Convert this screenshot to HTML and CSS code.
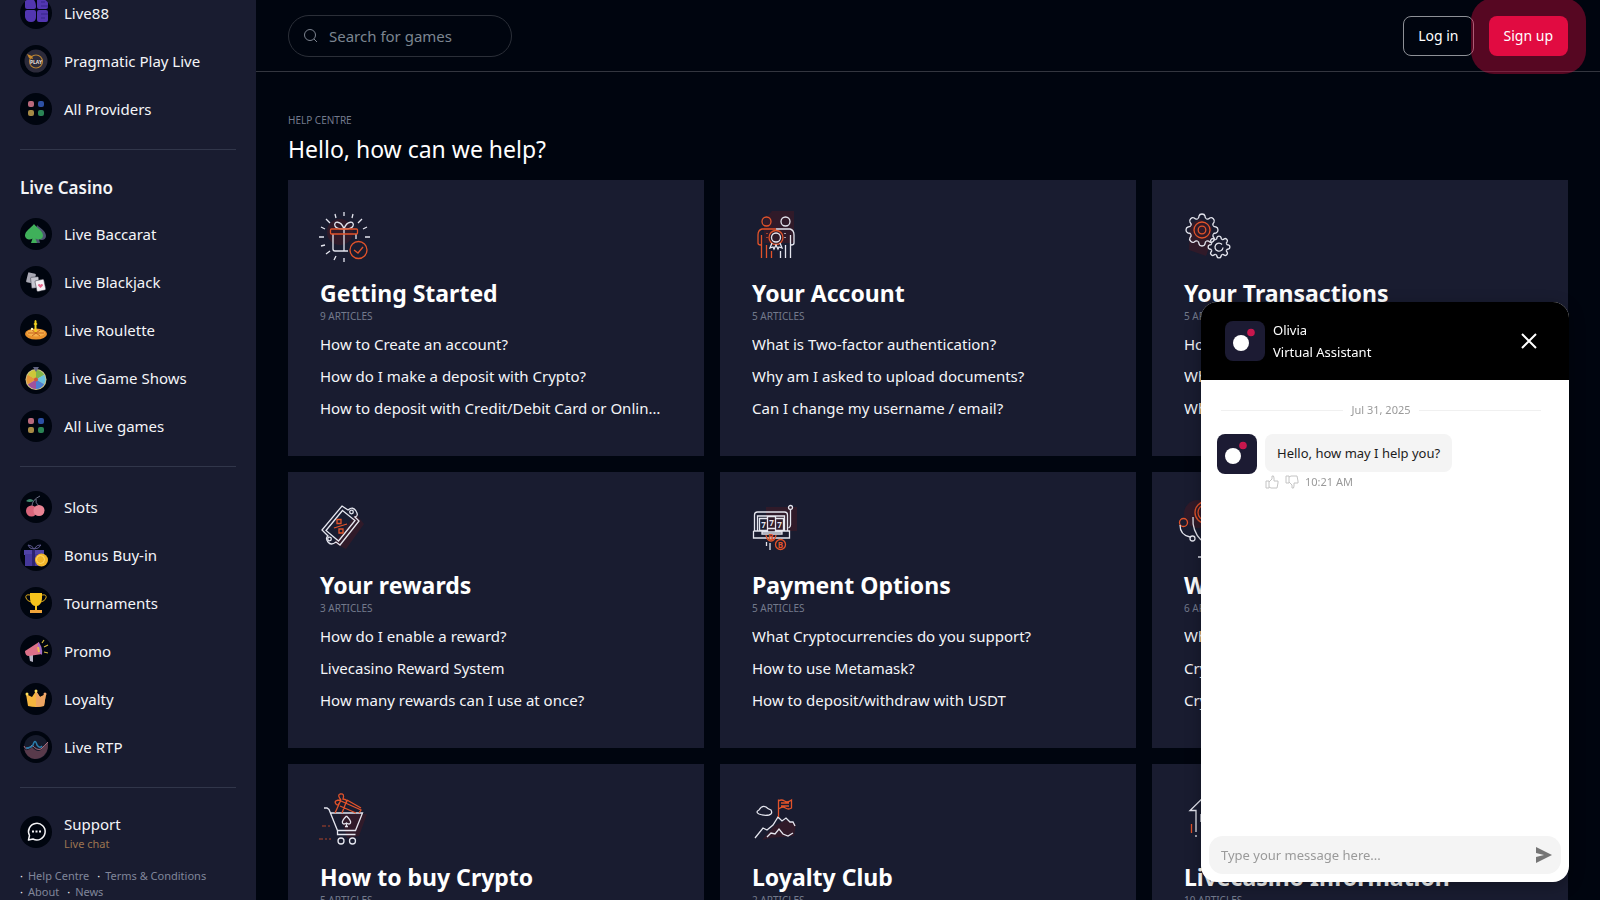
FILE: index.html
```html
<!DOCTYPE html>
<html lang="en">
<head>
    <meta charset="UTF-8">
    <meta name="viewport" content="width=device-width, initial-scale=1.0">
    <title>Help Centre</title>
    <link rel="stylesheet" href="styles.css">
</head>
<body>
    <div class="app">
        <aside class="sidebar">
            <nav class="menu">
                <a class="menu-item" href="#">
                    <svg class="menu-icon" viewBox="0 0 32 32"><g fill="#5236b0"><path d="M5 3q0-2 2-2h3c4 0 6 4 6 9q0 2-2 2H7q-2 0-2-2z"/><rect x="17" y="1" width="11" height="11" rx="2"/><path d="M5 15q0-2 2-2h7q2 0 2 2v5q0 5-5 5t-6-5z"/><rect x="17" y="13" width="11" height="12" rx="2"/></g><path d="M21 5h4M21 9h7M21 17h7M21 21h4" stroke="#35248a" stroke-width="1"/></svg>
                    Live88
                </a>
                <a class="menu-item" href="#">
                    <svg class="menu-icon" viewBox="0 0 32 32"><circle cx="16" cy="16" r="11.500" fill="#2b2a3a"/><circle cx="16" cy="16.500" r="6.500" fill="none" stroke="#b58235" stroke-width="1.200"/><path d="M7 9l5 2 1 3-4-1z" fill="#c9892c"/><path d="M11 14h10v5H11z" fill="#2b2a3a"/><text x="16" y="18.500" class="tiny-text" fill="#e4dfd6">PLAY</text></svg>
                    Pragmatic Play Live
                </a>
                <a class="menu-item" href="#">
                    <svg class="menu-icon" viewBox="0 0 32 32"><rect x="8" y="8" width="6" height="6" rx="2" fill="#b8697c"/><rect x="18" y="8" width="6" height="6" rx="2" fill="#2c50a4"/><rect x="8" y="17" width="6" height="6" rx="2" fill="#a58a45"/><rect x="18" y="17" width="6" height="6" rx="2" fill="#2a8455"/></svg>
                    All Providers
                </a>
            </nav>

            <nav class="menu">
                <h2 class="menu-title">Live Casino</h2>
                <a class="menu-item" href="#">
                    <svg class="menu-icon" viewBox="0 0 32 32"><path d="M17 7c3 3 9 6 9 11 0 4-5 5-7 3l1 4h-6z" fill="#4d5470"/><path d="M14 6c3 4 9 7 9 11.500 0 4-5 5-7.500 3l1.500 4.500h-6l1.500-4.500C10 23 5 21 5 17.500 5 13 11 10 14 6z" fill="#3fb05a"/></svg>
                    Live Baccarat
                </a>
                <a class="menu-item" href="#">
                    <svg class="menu-icon" viewBox="0 0 32 32"><rect x="7" y="7" width="8" height="10" rx="1" fill="#a9a9b4" transform="rotate(14 11 12)"/><rect x="11" y="11" width="8" height="11" rx="1" fill="#c6c6cf" stroke="#33353f" stroke-width=".5" transform="rotate(-6 15 16)"/><rect x="16" y="14" width="9" height="11" rx="1" fill="#f3f0f4" stroke="#33353f" stroke-width=".5" transform="rotate(-12 20 20)"/><path d="M20.500 22l-2.500-2.500c0-2 2-2 2.500-.5.500-1.500 2.500-1 2.500.5z" fill="#e8658a"/></svg>
                    Live Blackjack
                </a>
                <a class="menu-item" href="#">
                    <svg class="menu-icon" viewBox="0 0 32 32"><ellipse cx="16" cy="20" rx="11" ry="5.500" fill="#e8912e"/><ellipse cx="16" cy="19" rx="9" ry="3.500" fill="#f5b04b"/><path d="M8 19h16M12 16l8 6M20 16l-8 6" stroke="#c7651e"/><path d="M14.500 18V11l-1-1 1-1V7q1-2 2 0v2l1 1-1 1v7z" fill="#f2d21f"/><circle cx="12" cy="15" r="1.200" fill="#fff3b8"/></svg>
                    Live Roulette
                </a>
                <a class="menu-item" href="#">
                    <svg class="menu-icon" viewBox="0 0 32 32"><circle cx="16" cy="17.500" r="10.500" fill="#cfc58a"/><g stroke="none"><path d="M16 17.500V8a9.500 9.500 0 0 1 8.200 4.700z" fill="#7fb54a"/><path d="M16 17.500l8.200-4.800a9.500 9.500 0 0 1 0 9.500z" fill="#6cc1dd"/><path d="M16 17.500l8.200 4.700A9.500 9.500 0 0 1 16 27z" fill="#4a7fd2"/><path d="M16 17.500V27a9.500 9.500 0 0 1-8.200-4.800z" fill="#a0529c"/><path d="M16 17.500l-8.200 4.700a9.500 9.500 0 0 1 0-9.500z" fill="#e4963a"/><path d="M16 17.500l-8.200-4.800A9.500 9.500 0 0 1 16 8z" fill="#cdc738"/></g><circle cx="16" cy="17.500" r="2" fill="#d0543c"/><path d="M13 5h6l-3 5z" fill="#626583"/></svg>
                    Live Game Shows
                </a>
                <a class="menu-item" href="#">
                    <svg class="menu-icon" viewBox="0 0 32 32"><rect x="8" y="8" width="6" height="6" rx="2" fill="#b8697c"/><rect x="18" y="8" width="6" height="6" rx="2" fill="#2c50a4"/><rect x="8" y="17" width="6" height="6" rx="2" fill="#a58a45"/><rect x="18" y="17" width="6" height="6" rx="2" fill="#2a8455"/></svg>
                    All Live games
                </a>
            </nav>

            <nav class="menu">
                <a class="menu-item" href="#">
                    <svg class="menu-icon" viewBox="0 0 32 32"><path d="M12 15q0-6 8-10M19 15q-4-3-3-7" fill="none" stroke="#6d7087"/><path d="M6 10q4-4 8 0-5 2-8 0z" fill="#41886d"/><circle cx="11.500" cy="20" r="5.500" fill="#d9657b"/><circle cx="19" cy="19.500" r="5.500" fill="#e88494"/></svg>
                    Slots
                </a>
                <a class="menu-item" href="#">
                    <svg class="menu-icon" viewBox="0 0 32 32"><path d="M4 11h20v5H4z" fill="#5143a8"/><path d="M5 15h18v12H5z" fill="#45389a"/><path d="M12 11h3v16h-3z" fill="#2d2470"/><path d="M14 10Q9 10 8 6q4 0 6 4 3-5 7-4-2 4-7 4" fill="none" stroke="#59568a"/><circle cx="21.500" cy="21" r="6.500" fill="#f2b52b"/><circle cx="20.500" cy="20.500" r="4" fill="none" stroke="#ffd865"/></svg>
                    Bonus Buy-in
                </a>
                <a class="menu-item" href="#">
                    <svg class="menu-icon" viewBox="0 0 32 32"><path d="M10 6h12v5c0 5-3 8-5 8v4h4v3H11v-3h4v-4c-2 0-5-3-5-8z" fill="#f6c31c"/><path d="M10 8q-5-1-4 3 1 3 5 4M22 8q5-1 4 3-1 3-5 4" fill="none" stroke="#dcaa1c"/><path d="M10 23h12v3H10z" fill="#f0a43a"/></svg>
                    Tournaments
                </a>
                <a class="menu-item" href="#">
                    <svg class="menu-icon" viewBox="0 0 32 32"><path d="M9 20l4-1 0 8-3-1z" fill="#b7b4c4"/><path d="M5 16L19 7l3 12-13 2q-4 0-4-5z" fill="#dc7088"/><path d="M18 7q5 4 4 13-5-3-4-13z" fill="#a06bc4"/><path d="M18 12l1 5" stroke="#f0b94a" stroke-width="2"/><path d="M22 8l2-3M24 12l4-2M24 17l4 1" stroke="#d5ba3e" stroke-width="1.200"/></svg>
                    Promo
                </a>
                <a class="menu-item" href="#">
                    <svg class="menu-icon" viewBox="0 0 32 32"><path d="M6 11l6 3 4-6 4 6 6-3-2 12q-8 2-16 0z" fill="#f5b53e"/><path d="M16 8l4 6 6-3-2 12-8 1z" fill="#eca463"/><circle cx="16" cy="8" r="1.500" fill="#ffe05a"/><circle cx="7" cy="11" r="1.500" fill="#ffe05a"/><circle cx="25" cy="11" r="1.500" fill="#f1a76c"/></svg>
                    Loyalty
                </a>
                <a class="menu-item" href="#">
                    <svg class="menu-icon" viewBox="0 0 32 32"><circle cx="16" cy="16" r="12" fill="#161b2c"/><path d="M4 18q4 3 8-2 5 6 9 3 3-5 7-8 1 12-8 16-12 4-16-9z" fill="#583a4b"/><path d="M4 15q2 5 6 1l2-2q5 6 9 4 4-4 7-7" fill="none" stroke="#a86d7c"/><path d="M6 17q5 0 7-3 2-7 4 0 3 4 5 1" fill="none" stroke="#2a7dac" stroke-width="1.500"/></svg>
                    Live RTP
                </a>
            </nav>

            <div class="support">
                <svg class="menu-icon" viewBox="0 0 32 32" fill="none" stroke="#f4f4f6" stroke-width="1.500"><path d="M8.500 24l1-4.500A8.300 8.300 0 1 1 13 23z" stroke-linejoin="round"/><path d="M12 15.500h2M15.500 15.500h2M19 15.500h2" stroke-width="2"/></svg>
                <div>
                    <div class="support-name">Support</div>
                    <a class="support-link" href="#">Live chat</a>
                </div>
            </div>

            <ul class="footer-links">
                <li><a href="#">Help Centre</a></li>
                <li><a href="#">Terms &amp; Conditions</a></li>
                <li><a href="#">About</a></li>
                <li><a href="#">News</a></li>
            </ul>
        </aside>

        <div class="page">
            <header class="topbar">
                <label class="search">
                    <svg width="16" height="16" viewBox="0 0 16 16" fill="none" stroke="#7d8490"><circle cx="7" cy="7" r="5.500"/><path d="M11 11l3 3"/></svg>
                    <input type="search" placeholder="Search for games" aria-label="Search for games">
                </label>
                <div class="auth">
                    <button class="btn btn-login" type="button">Log in</button>
                    <button class="btn btn-signup" type="button">Sign up</button>
                </div>
            </header>

            <main class="content">
                <p class="eyebrow">Help Centre</p>
                <h1>Hello, how can we help?</h1>

                <div class="cards">
                    <section class="card">
                        <svg class="card-icon" viewBox="0 0 52 52">
                            <circle class="glow" cx="20" cy="20" r="13"/>
                            <path class="w" d="M24 0v4M15 2l1 4M33 2l-1 4M6 7l4 4M42 7l-4 4M1 15l4 2M47 15l-4 2M-1 25h5M45 25h5M1 34l4-1M6 42l4-3M14 48l2-4M24 50v-4"/>
                            <path class="w" d="M13 22v15q0 2 2 2h13M24 17v22M36 22v5M24 17c-3-9-11-8-9-3q1 3 9 3c3-9 11-8 9-3q-1 3-9 3"/>
                            <rect class="o" x="10.500" y="17" width="27" height="5" rx="1"/>
                            <circle class="o" cx="38.500" cy="38" r="8.500"/><path class="o" d="M34 38l4 3 5-6"/>
                        </svg>
                        <h2>Getting Started</h2>
                        <p class="count">9 articles</p>
                        <a href="#">How to Create an account?</a>
                        <a href="#">How do I make a deposit with Crypto?</a>
                        <a href="#">How to deposit with Credit/Debit Card or Online Banking?</a>
                    </section>

                    <section class="card">
                        <svg class="card-icon" viewBox="0 0 52 52">
                            <path class="glow" d="M20-1h22v32H12V8z"/>
                            <circle class="o" cx="14.500" cy="9.500" r="4.500"/><circle class="w" cx="33.500" cy="9.500" r="4.500"/>
                            <path class="o" d="M24 17H10q-4 1-4 6v8q0 2 3 2M9.500 23v23M14.500 33v13M19.500 39v7M15 21v1M15 25v1"/>
                            <path class="w" d="M24 17h14q4 1 4 6v8q0 2-3 2M38.500 23v23M33.500 33v13M28.500 39v7M33 21v1M33 25v1"/>
                            <circle class="o" cx="24" cy="25.500" r="7"/><circle class="w" cx="24" cy="25.500" r="4.500"/>
                            <path class="w" d="M20 31l-2 5 3-1 1 2 2-4 2 4 1-2 3 1-2-5"/>
                        </svg>
                        <h2>Your Account</h2>
                        <p class="count">5 articles</p>
                        <a href="#">What is Two-factor authentication?</a>
                        <a href="#">Why am I asked to upload documents?</a>
                        <a href="#">Can I change my username / email?</a>
                    </section>

                    <section class="card">
                        <svg class="card-icon" viewBox="0 0 52 52">
                            <defs>
                                <path id="tooth" d="M-4.600-11.100Q-3-11.500-3-14q.5-2 3-2t3 2q0 2.500 1.600 2.900"/>
                                <g id="gear">
                                    <use href="#tooth"/><use href="#tooth" transform="rotate(45)"/><use href="#tooth" transform="rotate(90)"/><use href="#tooth" transform="rotate(135)"/><use href="#tooth" transform="rotate(180)"/><use href="#tooth" transform="rotate(225)"/><use href="#tooth" transform="rotate(270)"/><use href="#tooth" transform="rotate(315)"/>
                                </g>
                            </defs>
                            <path class="glow" d="M6 12l10-5 12 8-2 18-4 11-17-6z"/>
                            <use class="w" href="#gear" transform="translate(18 18)"/>
                            <use class="w small-gear" href="#gear" transform="translate(35 35) scale(.68)"/>
                            <path class="w" d="M38 32.500a4 4 0 1 0 1 3"/>
                            <circle class="o" cx="18" cy="18" r="8"/><circle class="o" cx="18" cy="18" r="3.800"/>
                        </svg>
                        <h2>Your Transactions</h2>
                        <p class="count">5 articles</p>
                        <a href="#">How long do deposits take?</a>
                        <a href="#">What are the withdrawal limits?</a>
                        <a href="#">Where is my withdrawal?</a>
                    </section>

                    <section class="card">
                        <svg class="card-icon" viewBox="0 0 52 52">
                            <path class="glow" d="M36 10l8 10-18 25-12-6z"/>
                            <path class="w" d="M22 2l6 4q5-4 8 1t-1 6l4 4-19 24-4-3q-5 4-8 0t0-6l-6-6z"/>
                            <path class="w" d="M22.500 6.500L35 16.500 18.500 37 6 26.500z"/>
                            <circle class="w" cx="31.500" cy="8" r="1.800"/><circle class="w" cx="9.500" cy="35" r="1.800"/>
                            <path class="o" d="M14 24l13-4M17 15.500h4v4h-4zM19 25h4v4h-4z"/>
                        </svg>
                        <h2>Your rewards</h2>
                        <p class="count">3 articles</p>
                        <a href="#">How do I enable a reward?</a>
                        <a href="#">Livecasino Reward System</a>
                        <a href="#">How many rewards can I use at once?</a>
                    </section>

                    <section class="card">
                        <svg class="card-icon" viewBox="0 0 52 52">
                            <path class="glow" d="M14 3h31v24H14z"/>
                            <path class="w" d="M2.500 27V11q0-3 3-3h27q3 0 3 3v16M1.500 27H10M29 27h8.500v7H1.500v-7M5.500 27V12h27v15M7.500 14.500h8v12h-8zM15.500 12.500h8v12h-8zM23.500 14.500h8v12h-8zM10 30h20v-2H10z"/>
                            <circle class="w" cx="38.500" cy="3.500" r="2"/><path class="w" d="M38.500 6v15q0 2-2 3M14.500 38v4M18 39v7"/>
                            <circle class="o" cx="28.500" cy="40.500" r="5"/><path class="o" d="M14 31q1 6 5 6t5-6"/>
                            <text class="reel" x="11.500" y="24">7</text><text class="reel" x="19.500" y="21.500">7</text><text class="reel" x="27.500" y="24">7</text>
                            <text class="coin" x="28.500" y="43.500">B</text><text class="coin" x="19" y="36">B</text>
                        </svg>
                        <h2>Payment Options</h2>
                        <p class="count">5 articles</p>
                        <a href="#">What Cryptocurrencies do you support?</a>
                        <a href="#">How to use Metamask?</a>
                        <a href="#">How to deposit/withdraw with USDT</a>
                    </section>

                    <section class="card">
                        <svg class="card-icon" viewBox="0 0 52 52">
                            <circle class="glow" cx="14" cy="10" r="14"/>
                            <circle class="o" cx="-.5" cy="18.500" r="4"/><circle class="o" cx="22" cy="8.500" r="11"/><circle class="o" cx="22" cy="8.500" r="8"/>
                            <path class="w" d="M-4 21q0 10 10 12M9 13q-1 14 8 23M14 53h6"/><circle class="w" cx="8.500" cy="34.500" r="2.500"/>
                        </svg>
                        <h2>What is Crypto?</h2>
                        <p class="count">6 articles</p>
                        <a href="#">What is a wallet?</a>
                        <a href="#">Crypto glossary</a>
                        <a href="#">Crypto fees</a>
                    </section>

                    <section class="card">
                        <svg class="card-icon" viewBox="0 0 52 52">
                            <path class="glow" d="M20 18h27l-8 22-12 2z"/>
                            <path class="w" d="M4 12h3l2 1.500 8.500 21h18L42.500 17H11M17.500 34.500v4h18"/>
                            <circle class="w" cx="21" cy="45" r="3"/><circle class="w" cx="32.500" cy="45" r="3"/>
                            <path class="w" d="M26.500 20q-5 5-4 7t4 0q3 2 4 0t-4-7M26.500 27v3M25 30.500h3"/>
                            <path class="o" d="M15 17l5-11M21 5l20 9-2 3M27 4l14 8M22 17l5-13M20 10l16 7M21 4q-4-5-1-6 5-1 3 5 6 1 3 4M21 4q-8 0-5 4 2 3 5-4"/>
                            <path class="o dim" d="M2 30h4M8 30h2M-1 43h4M5 43h2M9 43h2"/>
                        </svg>
                        <h2>How to buy Crypto</h2>
                        <p class="count">5 articles</p>
                    </section>

                    <section class="card">
                        <svg class="card-icon" viewBox="0 0 52 52">
                            <path class="glow" d="M22 30l12-6 10 4-2 12-24 2-8 2z"/>
                            <path class="w" d="M3 42l8-10 4 2 6-5 5-8 4 4 4-3 4 4 3 0 2 4M15 41l4-4 4 1 4-5 4 5 5 2 5-3"/>
                            <path class="w" d="M7 18q-4-2 0-4 3-5 7-3 2 2 5 3 2 4-2 5-5 1-10-1"/>
                            <path class="o" d="M26.500 21V3.500M26.500 5q3-2 6 0t7-1v8q-3 2-6 0t-7 1M29 7h8M29 10h8"/>
                        </svg>
                        <h2>Loyalty Club</h2>
                        <p class="count">2 articles</p>
                    </section>

                    <section class="card">
                        <svg class="card-icon" viewBox="0 0 52 52">
                            <path class="w" d="M24-3L6 14.500h6V36M12 39v2M17 18v8"/>
                            <path class="o" d="M7.500 28v9"/>
                        </svg>
                        <h2>Livecasino Information</h2>
                        <p class="count">10 articles</p>
                    </section>
                </div>
            </main>
        </div>

        <section class="chat">
            <header class="chat-header">
                <svg class="avatar" viewBox="0 0 40 40"><circle cx="16" cy="22" r="8" fill="#fff"/><circle cx="26" cy="11.500" r="3.800" fill="#c8174d"/></svg>
                <div class="chat-title">
                    <div>Olivia</div>
                    <div>Virtual Assistant</div>
                </div>
                <button class="chat-close" type="button" aria-label="Close chat">
                    <svg width="16" height="16" viewBox="0 0 16 16" stroke="#fff" stroke-width="2"><path d="M1 1l14 14M15 1L1 15"/></svg>
                </button>
            </header>
            <div class="chat-body">
                <div class="chat-date">Jul 31, 2025</div>
                <div class="message">
                    <svg class="avatar" viewBox="0 0 40 40"><circle cx="16" cy="22" r="8" fill="#fff"/><circle cx="26" cy="11.500" r="3.800" fill="#c8174d"/></svg>
                    <div>
                        <div class="bubble">Hello, how may I help you?</div>
                        <div class="meta">
                            <svg width="14" height="14" viewBox="0 0 14 14" fill="none" stroke="#c4c4c4"><path d="M1 6h3v7H1zM4 7l3-3V1q2-1 2 2v3h4v2l-1 5H6l-2-1"/></svg>
                            <svg width="14" height="14" viewBox="0 0 14 14" fill="none" stroke="#c4c4c4"><path d="M1 1h3v7H1zM4 7l3 3v3q2 1 2-2V8h4V6l-1-5H6L4 2"/></svg>
                            <span>10:21 AM</span>
                        </div>
                    </div>
                </div>
            </div>
            <form class="chat-form">
                <input type="text" placeholder="Type your message here..." aria-label="Message">
                <button type="button" aria-label="Send">
                    <svg width="18" height="18" viewBox="0 0 18 18"><path d="M1 1l16 8L1 17V11l8-2-8-2z" fill="#757575"/></svg>
                </button>
            </form>
        </section>
    </div>
</body>
</html>
```
FILE: styles.css
```css
* {
    margin: 0;
    padding: 0;
    box-sizing: border-box;
}

body {
    font-family: 'Segoe UI', 'Noto Sans', sans-serif;
    font-size: 15px;
    line-height: 24px;
    background: #00050f;
    color: #f4f5f8;
}

a {
    color: inherit;
    text-decoration: none;
}

button, input {
    font: inherit;
    border: none;
    outline: none;
    background: none;
}

button {
    cursor: pointer;
}

.app {
    display: flex;
    height: 100vh;
    overflow: hidden;
}

/* Sidebar, scrolled to its end */
.sidebar {
    display: flex;
    flex-direction: column;
    justify-content: flex-end;
    flex: 0 0 256px;
    padding: 0 20px;
    overflow: hidden;
    background: #191c30;
}

.menu {
    flex-shrink: 0;
    padding-bottom: 16px;
    margin-bottom: 16px;
    border-bottom: 1px solid #31364a;
}

.menu-title {
    font-size: 17px;
    font-weight: 600;
    line-height: 44px;
}

.menu-item, .support {
    display: flex;
    align-items: center;
    gap: 12px;
    height: 48px;
    flex-shrink: 0;
}

.menu-icon {
    width: 32px;
    height: 32px;
    border-radius: 50%;
    background: #00050f;
}

.tiny-text {
    font-size: 5px;
    font-weight: 700;
    text-anchor: middle;
}

.support {
    margin: 4px 0 12px;
}

.support-name {
    line-height: 24px;
}

.support-link {
    display: block;
    font-size: 11px;
    line-height: 16px;
    color: #9c7550;
}

.footer-links {
    display: flex;
    flex-wrap: wrap;
    flex-shrink: 0;
    column-gap: 8px;
    list-style: none;
    font-size: 11px;
    line-height: 16px;
    color: #80869a;
}

.footer-links li::before {
    content: '·';
    margin-right: 5px;
    color: #f4f5f8;
}

/* Main column */
.page {
    flex: 1;
    min-width: 0;
}

.topbar {
    display: flex;
    align-items: center;
    justify-content: space-between;
    height: 72px;
    padding: 0 32px;
    border-bottom: 1px solid #33363f;
}

.search {
    display: flex;
    align-items: center;
    gap: 10px;
    width: 224px;
    height: 42px;
    padding: 0 14px;
    border: 1px solid #2b2f38;
    border-radius: 21px;
}

.search input {
    flex: 1;
    min-width: 0;
    color: #fff;
}

.search input::placeholder {
    color: #7c8591;
}

.auth {
    display: flex;
    gap: 15px;
}

.btn {
    height: 40px;
    padding: 0 15px;
    border-radius: 8px;
    font-size: 14px;
    color: #fff;
}

.btn-login {
    padding: 0 14px;
    border: 1px solid #8d9096;
}

.btn-signup {
    background: #e10b41;
    box-shadow: 0 0 0 18px rgba(225, 11, 65, 0.38);
}

.content {
    padding: 40px 32px;
}

.eyebrow, .count {
    font-size: 10px;
    line-height: 16px;
    text-transform: uppercase;
    color: #737a8c;
}

h1 {
    padding-top: 2px;
    margin-bottom: 12px;
    font-size: 23px;
    font-weight: 400;
    line-height: 38px;
    color: #fff;
}

.cards {
    display: grid;
    grid-template-columns: repeat(3, minmax(0, 1fr));
    gap: 16px;
}

.card {
    padding: 32px;
    background: #191c30;
}

.card-icon {
    display: block;
    width: 52px;
    height: 52px;
    margin-bottom: 14px;
    overflow: visible;
    fill: none;
    stroke-width: 1.3px;
}

.card-icon .w {
    stroke: #e4e5ee;
}

.card-icon .o {
    stroke: #e2532a;
}

.card-icon .small-gear {
    stroke-width: 2px;
}

.card-icon .dim {
    opacity: 0.5;
}

.card-icon .glow {
    fill: #3a1a27;
    opacity: 0.7;
}

.reel, .coin {
    font-size: 8px;
    font-weight: 700;
    text-anchor: middle;
    fill: #e4e5ee;
}

.coin {
    fill: #e2532a;
}

.card h2 {
    font-size: 23px;
    font-weight: 700;
    line-height: 30px;
    color: #fff;
}

.card .count {
    margin-bottom: 4px;
}

.card a {
    display: block;
    padding-right: 6px;
    overflow: hidden;
    line-height: 32px;
    white-space: nowrap;
    text-overflow: ellipsis;
}

/* Chat window */
.chat {
    position: fixed;
    right: 31px;
    bottom: 18px;
    display: flex;
    flex-direction: column;
    width: 368px;
    height: 580px;
    border-radius: 16px;
    overflow: hidden;
    background: #fff;
    color: #1c1c1c;
    font-size: 13px;
    box-shadow: 0 4px 16px rgba(0, 0, 0, 0.3);
}

.chat-header {
    display: flex;
    align-items: center;
    gap: 8px;
    height: 78px;
    padding: 0 32px 0 24px;
    background: #000;
    color: #fff;
}

.avatar {
    flex-shrink: 0;
    width: 40px;
    height: 40px;
    border-radius: 8px;
    background: #1c1b33;
}

.chat-title {
    flex: 1;
    line-height: 22px;
}

.chat-close {
    display: flex;
}

.chat-body {
    flex: 1;
    padding: 20px 16px;
}

.chat-date {
    display: flex;
    align-items: center;
    gap: 8px;
    margin-bottom: 14px;
    padding: 0 12px 0 4px;
    font-size: 11px;
    line-height: 20px;
    color: #9a9a9a;
}

.chat-date::before, .chat-date::after {
    content: '';
    flex: 1;
    border-top: 1px solid #f0f0f0;
}

.message {
    display: flex;
    gap: 8px;
}

.bubble {
    padding: 7px 12px;
    border-radius: 8px;
    background: #f4f4f4;
}

.meta {
    display: flex;
    align-items: center;
    gap: 6px;
    font-size: 11px;
    line-height: 20px;
    color: #9a9a9a;
}

.chat-form {
    display: flex;
    align-items: center;
    height: 38px;
    margin: 8px;
    padding: 0 8px 0 12px;
    border-radius: 14px;
    background: #f4f4f4;
}

.chat-form input {
    flex: 1;
    min-width: 0;
}

.chat-form input::placeholder {
    color: #9a9a9a;
}

.chat-form button {
    display: flex;
}
```
